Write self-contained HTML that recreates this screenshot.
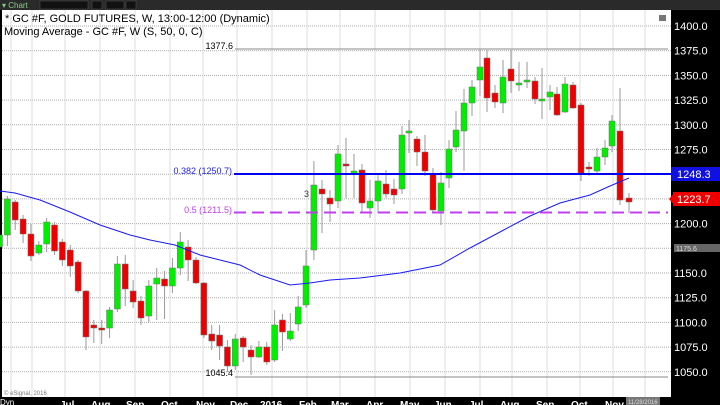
<!DOCTYPE html>
<html><head><meta charset="utf-8"><style>
body{margin:0;width:720px;height:405px;overflow:hidden;background:#000;font-family:"Liberation Sans",sans-serif}
svg{display:block}
</style></head><body>
<svg id="s" width="720" height="405" xmlns="http://www.w3.org/2000/svg" font-family="Liberation Sans, sans-serif">
<rect x="0" y="0" width="720" height="405" fill="#000"/>
<rect x="0" y="0" width="720" height="10" fill="#2a2a2a"/>
<rect x="40" y="1" width="48" height="8" fill="#111" stroke="#555" stroke-width="0.5"/>
<rect x="92" y="1" width="10" height="8" fill="#111" stroke="#555" stroke-width="0.5"/>
<rect x="106" y="1" width="18" height="8" fill="#111" stroke="#555" stroke-width="0.5"/>
<rect x="126" y="1" width="10" height="8" fill="#111" stroke="#555" stroke-width="0.5"/>
<text x="2" y="8" font-size="8" fill="#8c8">▾ Chart</text>
<rect x="2" y="10" width="669" height="387" fill="#fff"/>
<g id="grid"></g>
<text x="5" y="22" font-size="11" fill="#000">* GC #F, GOLD FUTURES, W, 13:00-12:00 (Dynamic)</text>
<text x="4" y="35" font-size="11" fill="#000">Moving Average - GC #F, W (S, 50, 0, C)</text>
<text x="233" y="49" font-size="9" fill="#000" text-anchor="end">1377.6</text>
<line x1="235" y1="49" x2="668" y2="49" stroke="#888" stroke-width="1"/>
<text x="233" y="376" font-size="9" fill="#000" text-anchor="end">1045.4</text>
<line x1="235" y1="377" x2="668" y2="377" stroke="#888" stroke-width="1"/>
<g id="c"></g>
<polyline fill="none" stroke="#1a1aff" stroke-width="1" points="0,191 15,193 40,200 70,212 100,225 130,235 150,240 175,245 200,255 240,265 260,275 290,285 310,283 330,280 360,278 400,273 440,265 470,248 500,232 530,216 560,203 590,195 610,186 629,178"/>
<line x1="234" y1="174" x2="671" y2="174" stroke="#0000ee" stroke-width="2"/>
<line x1="234" y1="212.5" x2="668" y2="212.5" stroke="#c040f0" stroke-width="2" stroke-dasharray="12,6"/>
<text x="232" y="174" font-size="9" fill="#2222ee" text-anchor="end">0.382 (1250.7)</text>
<text x="232" y="213" font-size="9" fill="#c040f0" text-anchor="end">0.5 (1211.5)</text>
<text x="304" y="197" font-size="9" fill="#333">3</text>
<text x="4" y="395" font-size="6" fill="#777">© eSignal, 2016</text>
<rect x="659" y="15" width="7" height="6" fill="#777"/>
<g id="ax" font-size="11" fill="#fff"></g>
<rect x="671" y="167" width="49" height="14" fill="#1010e0"/>
<polygon points="671,174 676,167 676,181" fill="#1010e0"/>
<text x="677" y="178" font-size="11" fill="#fff">1248.3</text>
<rect x="673" y="192" width="47" height="14" fill="#e00"/>
<polygon points="669,199 675,192 675,206" fill="#e00"/>
<text x="677" y="203" font-size="11" fill="#fff">1223.7</text>
<rect x="674" y="244" width="46" height="8" fill="#666"/>
<text x="676" y="251" font-size="7" fill="#ddd">1175.6</text>
<rect x="626" y="397" width="34" height="8" fill="#777"/>
<text x="628" y="404" font-size="6" fill="#ddd">11/28/2016</text>
<g font-size="10" fill="#fff" font-weight="bold">
<text x="0" y="405" font-size="8" font-weight="normal">Dyn</text>
<text x="60" y="408">Jul</text><text x="91" y="408">Aug</text><text x="126" y="408">Sep</text><text x="161" y="408">Oct</text><text x="196" y="408">Nov</text><text x="230" y="408">Dec</text><text x="260" y="408">2016</text><text x="299" y="408">Feb</text><text x="331" y="408">Mar</text><text x="366" y="408">Apr</text><text x="400" y="408">May</text><text x="434" y="408">Jun</text><text x="469" y="408">Jul</text><text x="500" y="408">Aug</text><text x="536" y="408">Sep</text><text x="571" y="408">Oct</text><text x="605" y="408">Nov</text>
</g>
</svg>
<script>
var NS="http://www.w3.org/2000/svg";
function el(p,t,a){var e=document.createElementNS(NS,t);for(var k in a)e.setAttribute(k,a[k]);p.appendChild(e);return e;}
var g=document.getElementById('grid');
for(var i=0;i<15;i++){var y=26+i*24.7;el(g,'line',{x1:2,x2:671,y1:y,y2:y,stroke:'#aaa','stroke-dasharray':'1,1','stroke-width':1});}
[11,32,65,100,135,170,203,237,272,307,340,375,410,445,480,512,547,580,613,645].forEach(function(x){el(g,'line',{x1:x,x2:x,y1:10,y2:397,stroke:'#ddd','stroke-width':1});});
var ax=document.getElementById('ax');
for(var i=0;i<15;i++){if(i==6||i==9)continue;var y=26+i*24.7;var t=el(ax,'text',{x:674,y:y+4});t.textContent=(1400-25*i).toFixed(1);}
var d=[[1,235,247,230,250,'g'],[7.5,199,235,196,246,'g'],[15.5,202,220,200,230,'r'],[23.5,219,234,215,243,'r'],[31.5,234,256,224,261,'r'],[39,245,253,241,255,'g'],[47,222,244,218,252,'g'],[55,225,251,222,255,'r'],[63,242,260,239,266,'r'],[71,250,266,245,277,'r'],[79,262,291,260,293,'r'],[87,291,337,290,350,'r'],[95,325,328,320,343,'r'],[103,328,329,320,344,'r'],[110,310,328,307,338,'g'],[118,264,309,256,312,'g'],[126,264,289,255,306,'r'],[134,291,302,280,308,'r'],[142,301,318,296,325,'r'],[150,286,316,280,322,'g'],[158,278,284,268,320,'g'],[166,279,286,271,319,'r'],[174,268,286,258,293,'g'],[182,242,268,232,275,'g'],[190,247,260,240,281,'r'],[198,260,283,257,284,'r'],[206,283,335,282,338,'r'],[214,334,341,325,350,'r'],[222,335,346,325,360,'r'],[230,347,366,340,372,'r'],[238,339,366,334,370,'g'],[246,338,347,336,362,'r'],[254,350,357,345,375,'r'],[262,347,357,341,358,'g'],[270,347,362,342,365,'r'],[278,325,360,310,362,'g'],[286,320,332,314,351,'r'],[294,331,339,313,341,'g'],[302,307,324,296,331,'g'],[306,266,305,250,308,'g'],[314,185,250,161,260,'g'],[322,189,194,180,233,'r'],[330,198,204,190,222,'r'],[338,154,201,145,208,'g'],[346,164,166,138,198,'r'],[354,171,174,154,198,'g'],[362,170,203,164,213,'r'],[370,201,208,180,218,'g'],[378,181,201,174,213,'g'],[386,184,194,170,198,'r'],[394,189,195,179,204,'r'],[402,135,189,126,194,'g'],[409,131,132,120,153,'g'],[417,139,152,136,166,'r'],[425,152,171,135,176,'r'],[433,174,210,168,213,'r'],[441,183,211,172,225,'g'],[449,149,178,140,188,'g'],[456,130,147,111,152,'g'],[464,103,131,89,171,'g'],[472,87,103,80,116,'g'],[480,67,80,49,96,'g'],[487,58,98,50,112,'r'],[495,93,102,85,108,'r'],[503,77,103,60,113,'g'],[511,69,81,50,93,'r'],[519,83,84,62,91,'g'],[527,80,82,62,88,'g'],[535,81,99,77,104,'r'],[542,99,101,68,119,'g'],[550,92,97,85,110,'g'],[557,94,115,87,116,'r'],[565,84,112,77,113,'g'],[573,85,108,82,109,'r'],[581,105,173,103,181,'r'],[589,167,169,162,176,'r'],[597,157,171,148,173,'g'],[605,148,157,140,165,'g'],[612,121,146,115,152,'g'],[620,131,200,88,205,'r'],[629,198,202,193,213,'r']];
for(var i=0;i<41;i++){d[i][0]=-0.5+i*7.86;}
var c=document.getElementById('c');
d.forEach(function(k){el(c,'line',{x1:k[0],x2:k[0],y1:k[3],y2:k[4],stroke:'#999','stroke-width':1});
var h=Math.max(k[2]-k[1],2);el(c,'rect',{x:k[0]-3,y:k[1],width:6,height:h,fill:k[5]=='g'?'#00ee00':'#ee0000',stroke:'#777','stroke-width':0.5});});
</script>
</body></html>
